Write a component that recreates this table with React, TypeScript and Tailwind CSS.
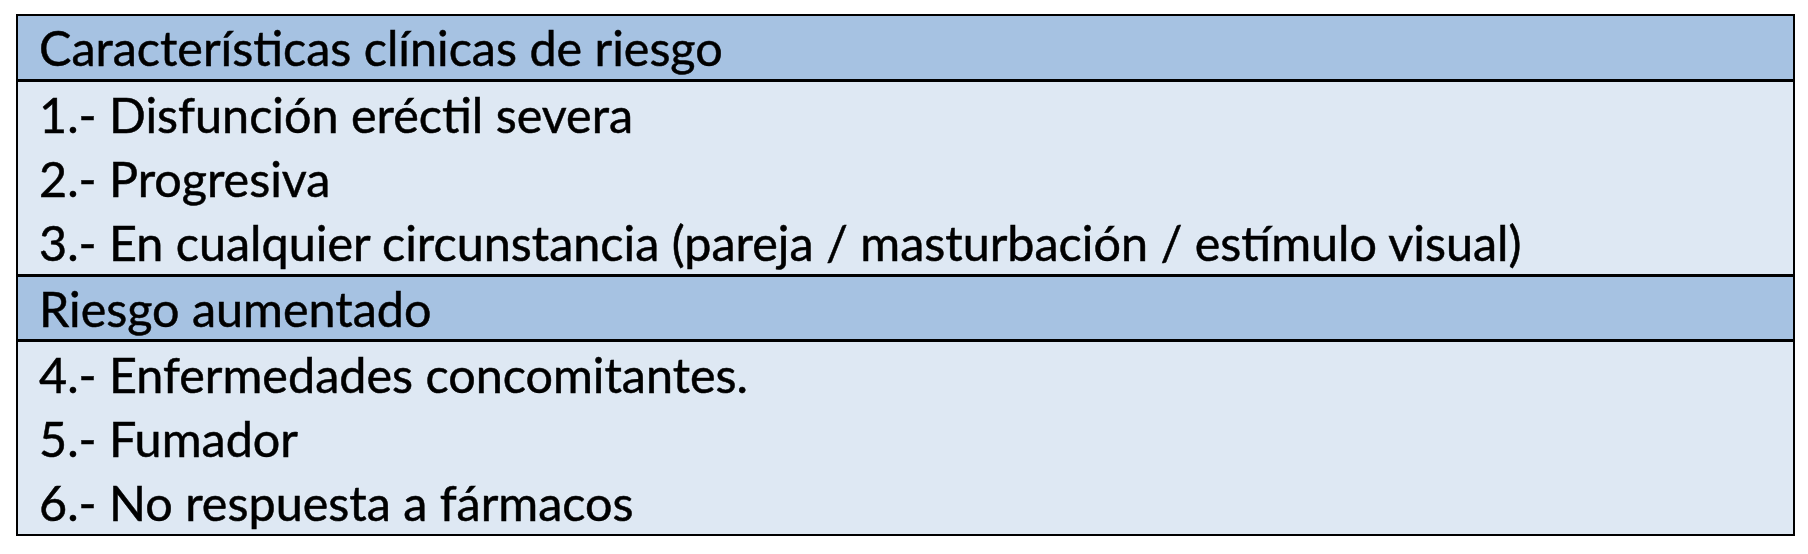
const groups = [
  {
    title: "Características clínicas de riesgo",
    items: [
      "1.- Disfunción eréctil severa",
      "2.- Progresiva",
      "3.- En cualquier circunstancia (pareja / masturbación / estímulo visual)",
    ],
  },
  {
    title: "Riesgo aumentado",
    items: [
      "4.- Enfermedades concomitantes.",
      "5.- Fumador",
      "6.- No respuesta a fármacos",
    ],
  },
];

export default function App() {
  return (
    <div className="w-[1808px] h-[554px] bg-white pt-[14px] pl-[16px]">
      <div
        className="w-[1779px] border-2 border-black text-black text-[48.5px] [-webkit-text-stroke:0.5px_black]"
        style={{ fontFamily: "Lato, 'Open Sans', sans-serif" }}
      >
        {groups.map((g, gi) => (
          <div key={gi}>
            <div
              className={`leading-[63px] pl-[21px] bg-[#a6c2e2] border-b-[3px] border-black ${
                gi > 0 ? "border-t-[3px] h-[68px] leading-[62px]" : "h-[66px]"
              }`}
            >
              {g.title}
            </div>
            <div className="bg-[#dee8f3]">
              {g.items.map((it, i) => (
                <div key={i} className="h-[64px] leading-[64px] pl-[21px]">
                  {it}
                </div>
              ))}
            </div>
          </div>
        ))}
      </div>
    </div>
  );
}
